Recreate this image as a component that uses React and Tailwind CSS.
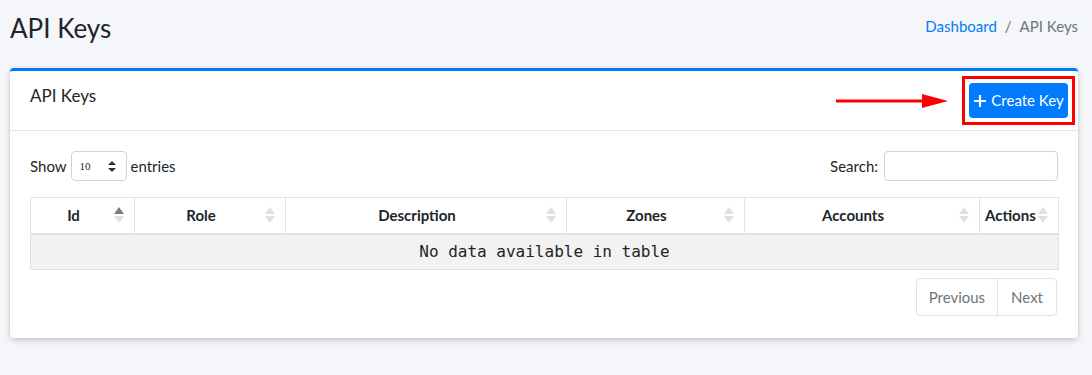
const cols = [
  { label: "Id", w: "w-[104px]", asc: true },
  { label: "Role", w: "w-[151px]" },
  { label: "Description", w: "w-[281px]" },
  { label: "Zones", w: "w-[178px]" },
  { label: "Accounts", w: "w-[235px]" },
  { label: "Actions", w: "w-[79px]", tight: true },
];

function SortIcon({ asc }) {
  return (
    <span className="absolute right-[10px] top-1/2 -translate-y-1/2 flex flex-col items-center gap-[2px]">
      <svg width="10" height="7" viewBox="0 0 10 7">
        <path d="M5 0 L10 7 L0 7 Z" fill={asc ? "#7d7d7d" : "#e0e0e0"} />
      </svg>
      <svg width="10" height="7" viewBox="0 0 10 7">
        <path d="M0 0 L10 0 L5 7 Z" fill="#e0e0e0" />
      </svg>
    </span>
  );
}

export default function App() {
  return (
    <div
      className="min-h-[375px] w-full bg-[#f4f6f9] text-[#212529]"
      style={{ fontFamily: "Lato, 'Liberation Sans', sans-serif" }}
    >
      {/* header */}
      <div className="flex items-start justify-between px-[10px] pt-[13px] h-[68px]">
        <h1 className="text-[26px] leading-[30px] text-[#212529]">API Keys</h1>
        <div className="flex items-center gap-2 text-[15px] pr-[4px] mt-[2px]">
          <span className="text-[#007bff]">Dashboard</span>
          <span className="text-[#6c757d]">/</span>
          <span className="text-[#6c757d]">API Keys</span>
        </div>
      </div>

      {/* card */}
      <div className="mx-[10px] w-[1068px] rounded-[4px] border-t-[3px] border-[#007bff] bg-white shadow-[0_0_1px_rgba(0,0,0,0.125),0_2px_6px_rgba(0,0,0,0.2)]">
        <div className="flex items-start justify-between h-[60px] border-b border-[#e3e3e3] pl-[20px] pr-[3px]">
          <h3 className="text-[17px] mt-[12px]">API Keys</h3>
          <div className="flex items-center mt-[5px]">
            <svg width="120" height="16" viewBox="0 0 120 16" className="mr-[10px]">
              <line x1="4" y1="8" x2="96" y2="8" stroke="#ff0000" strokeWidth="3" />
              <path d="M90 1 L116 8 L90 15 Z" fill="#ff0000" />
            </svg>
            <div className="border-[3px] border-[#ff0000] p-[4px]">
              <button className="flex items-center gap-[4px] h-[35px] w-[99px] justify-center rounded-[4px] bg-[#007bff] text-white text-[15px]">
                <svg width="14" height="14" viewBox="0 0 14 14">
                  <path d="M7 1 V13 M1 7 H13" stroke="white" strokeWidth="2.2" />
                </svg>
                Create Key
              </button>
            </div>
          </div>
        </div>

        <div className="px-[20px] pt-[20px] pb-[22px]">
          <div className="flex items-center justify-between">
            <div className="flex items-center gap-[4px] text-[15px]">
              <span>Show</span>
              <div className="flex items-center justify-between w-[56px] h-[30px] rounded-[4px] border border-[#ced4da] pl-[8px] pr-[10px]">
                <span className="text-[11px]" style={{ fontFamily: "'Liberation Serif', serif" }}>10</span>
                <svg width="8" height="11" viewBox="0 0 8 11">
                  <path d="M4 0 L8 4 L0 4 Z M0 7 L8 7 L4 11 Z" fill="#333" />
                </svg>
              </div>
              <span>entries</span>
            </div>
            <div className="flex items-center gap-[6px] text-[15px]">
              <span>Search:</span>
              <div className="w-[174px] h-[30px] rounded-[4px] border border-[#ced4da]" />
            </div>
          </div>

          <table className="mt-[16px] w-[1028px] table-fixed border-collapse">
            <thead>
              <tr className="h-[36px]">
                {cols.map((c) => (
                  <th
                    key={c.label}
                    className={`${c.w} relative border border-b-2 border-[#dee2e6] text-[15px] font-bold ${
                      c.tight ? "pl-[5px] pr-[20px] text-left" : "pl-[12px] pr-[30px] text-center"
                    }`}
                  >
                    {c.label}
                    <SortIcon asc={c.asc} />
                  </th>
                ))}
              </tr>
            </thead>
            <tbody>
              <tr className="h-[36px] bg-[#f2f2f2]">
                <td
                  colSpan={6}
                  className="border border-[#dee2e6] text-center text-[16px] text-[#212529]"
                  style={{ fontFamily: "'DejaVu Sans Mono', monospace" }}
                >
                  No data available in table
                </td>
              </tr>
            </tbody>
          </table>

          <div className="flex justify-end mt-[8px] pr-[1px]">
            <div className="flex h-[38px] rounded-[4px] border border-[#dee2e6] text-[15px] text-[#6c757d]">
              <span className="flex items-center px-[12px] border-r border-[#dee2e6]">Previous</span>
              <span className="flex items-center px-[13px]">Next</span>
            </div>
          </div>
        </div>
      </div>
    </div>
  );
}
